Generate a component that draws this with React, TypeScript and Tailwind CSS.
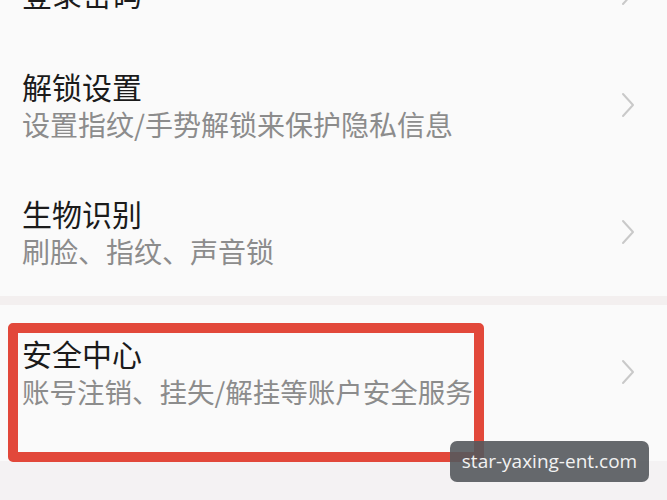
const FONT = { fontFamily: '"Noto Sans CJK SC", "Noto Sans", sans-serif' };

type Item = { title: string; desc?: string };

const groupOne: Item[] = [
  { title: "登录密码" },
  { title: "解锁设置", desc: "设置指纹/手势解锁来保护隐私信息" },
  { title: "生物识别", desc: "刷脸、指纹、声音锁" },
];

const Chevron = () => (
  <svg width="14" height="26" viewBox="0 0 14 26" fill="none" className="shrink-0">
    <path d="M2 2 L12 13 L2 24" stroke="#c9c9c9" strokeWidth="2" strokeLinecap="round" strokeLinejoin="round" />
  </svg>
);

const Row = ({ item }: { item: Item }) =>
  item.desc ? (
    <div className="flex h-[127px] items-center justify-between pl-[22px] pr-[32px]">
      <div className="flex flex-col">
        <p className="text-[30px] leading-[38px] text-[#1b1b1b]">{item.title}</p>
        <p className="text-[28px] leading-[38px] text-[#8c8c8c]">{item.desc}</p>
      </div>
      <Chevron />
    </div>
  ) : (
    <div className="flex h-[96px] items-center justify-between pl-[22px] pr-[32px]">
      <p className="text-[30px] leading-[38px] text-[#1b1b1b]">{item.title}</p>
      <Chevron />
    </div>
  );

export default function App() {
  return (
    <div className="relative h-[500px] w-[667px] overflow-hidden bg-[#fafafa]" style={FONT}>
      <div className="-mt-[55px] flex flex-col">
        {groupOne.map((it) => (
          <Row key={it.title} item={it} />
        ))}
        <div className="mt-[1px] h-[9px] bg-[#f3efef]" />
        <div className="relative">
          <div className="flex h-[156px] items-center justify-between pl-[22px] pr-[32px] pb-[22px]">
            <div className="flex flex-col">
              <p className="text-[30px] leading-[38px] text-[#1b1b1b]">安全中心</p>
              <p className="text-[27.5px] leading-[38px] text-[#8c8c8c]">账号注销、挂失/解挂等账户安全服务</p>
            </div>
            <Chevron />
          </div>
          <div className="absolute left-[8px] top-[18px] h-[139px] w-[476px] rounded-[5px] border-[10px] border-[#e2483a]" />
        </div>
        <div className="h-[60px] bg-[#f4f2f3]" />
      </div>
      <div
        className="absolute left-[450px] top-[441px] flex h-[41px] w-[199px] items-center justify-center rounded-[7px] bg-[#55595d]/90"
        style={{ fontFamily: '"Open Sans", "Noto Sans", sans-serif' }}
      >
        <span className="text-[19px] text-[#f2f2f2]">star-yaxing-ent.com</span>
      </div>
    </div>
  );
}
